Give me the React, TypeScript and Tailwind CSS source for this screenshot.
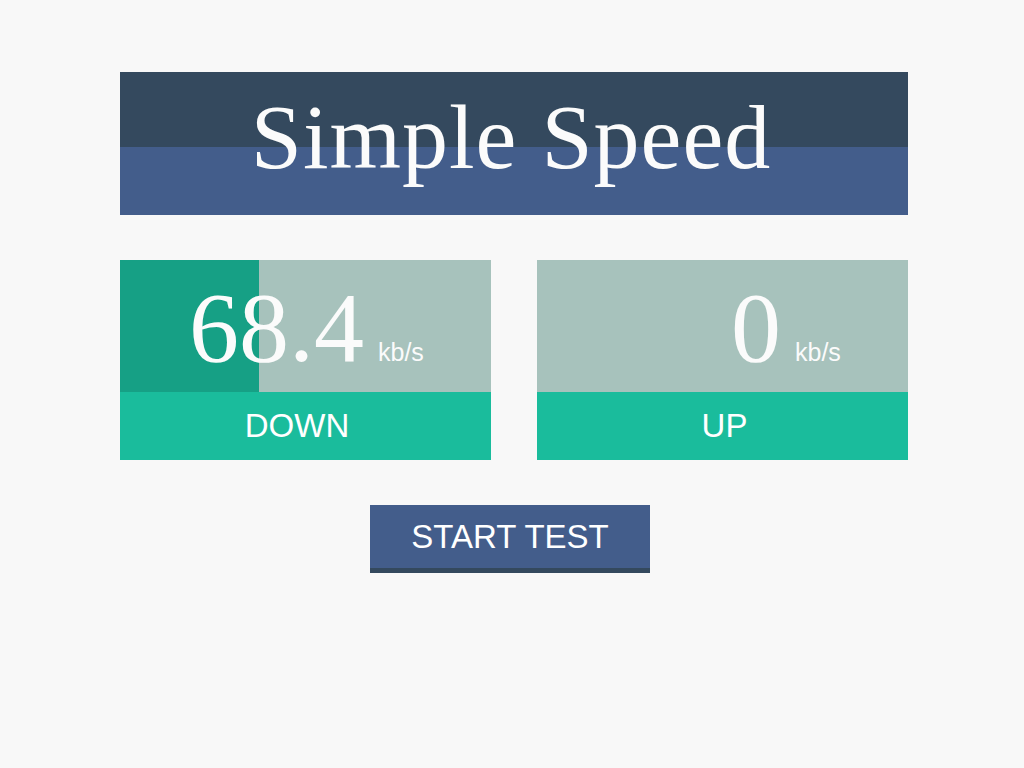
import React from 'react';

const serif = "font-['Liberation_Serif','Times_New_Roman',serif]";
const sans = "font-['Liberation_Sans',Arial,sans-serif]";

type GaugeProps = {
  value: string;
  label: string;
  progress: number;
  labelClass: string;
};

const Gauge = ({ value, label, progress, labelClass }: GaugeProps) => {
  return (
    <div className="flex flex-col">
      {/* Reading */}
      <div className="relative h-[132px] bg-[#a7c2bc] overflow-hidden">
        <div className="absolute inset-y-0 left-0 bg-[#16a085]" style={{ width: `${progress}%` }} />
        <div className="relative flex items-baseline pt-[18px] text-[#fbfbfb]">
          <span className={`${serif} w-[244px] text-right text-[100px] leading-none`}>{value}</span>
          <span className={`${sans} ml-[14px] text-[25px] leading-none`}>kb/s</span>
        </div>
      </div>

      {/* Label */}
      <div
        className={`${sans} ${labelClass} flex h-[68px] items-center justify-center bg-[#1abc9c] text-[33px] text-white`}
      >
        {label}
      </div>
    </div>
  );
};

export default function App() {
  return (
    <div className="min-h-[768px] bg-[#f8f8f8]">
      <div className="ml-[120px] flex w-[788px] flex-col items-center pt-[72px]">
        {/* Title */}
        <div className="h-[143px] w-full bg-[linear-gradient(to_bottom,#34495e_75px,#435d8b_75px)] pt-[19px] pr-[6px] text-center">
          <h1 className={`${serif} text-[92px] leading-none tracking-[1px] text-[#fbfbfb]`}>Simple Speed</h1>
        </div>

        {/* Gauges */}
        <div className="mt-[45px] grid w-full grid-cols-2 gap-[46px]">
          <Gauge value="68.4" label="DOWN" progress={37.5} labelClass="pr-[17px]" />
          <Gauge value="0" label="UP" progress={0} labelClass="pl-[4px]" />
        </div>

        {/* Start */}
        <button
          className={`${sans} mt-[45px] mr-[8px] h-[68px] w-[280px] border-b-[5px] border-[#34495e] bg-[#435d8b] text-[33px] text-white`}
        >
          START TEST
        </button>
      </div>
    </div>
  );
}
